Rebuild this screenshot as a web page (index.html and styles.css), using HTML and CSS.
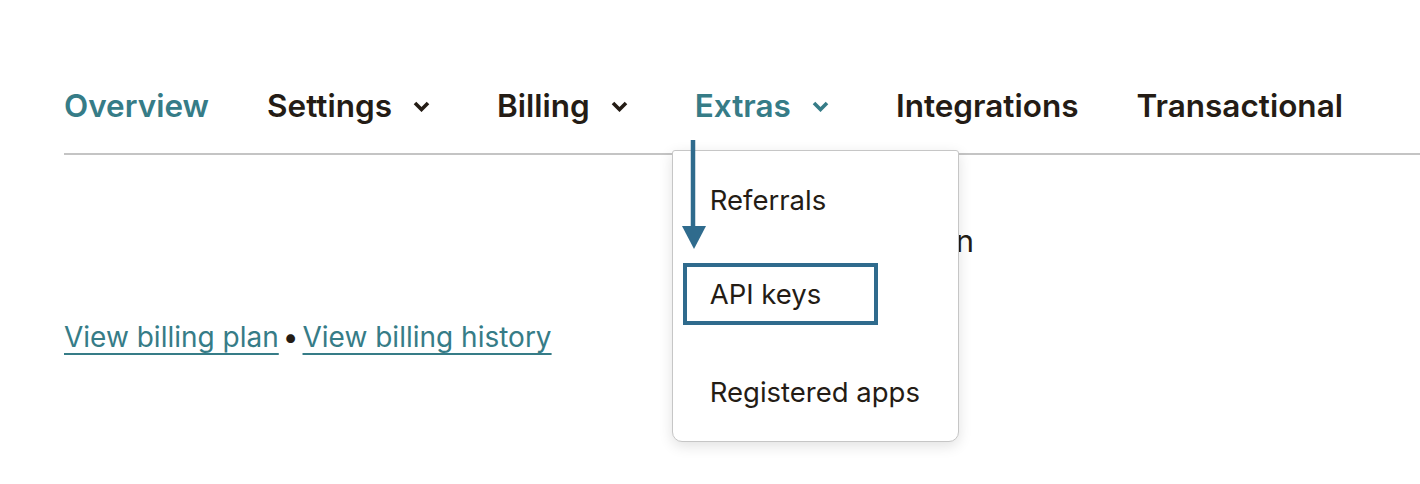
FILE: index.html
```html
<!DOCTYPE html>
<html lang="en">
<head>
<meta charset="utf-8">
<title>Account</title>
<link rel="stylesheet" href="styles.css">
</head>
<body>
<div class="page">
  <nav class="tabs">
    <a class="tab active" href="#">Overview</a>
    <a class="tab has-menu" href="#">Settings<svg class="chev" viewBox="0 0 17 11"><path d="M2 2 L8.5 8.5 L15 2"/></svg></a>
    <a class="tab has-menu" href="#">Billing<svg class="chev" viewBox="0 0 17 11"><path d="M2 2 L8.5 8.5 L15 2"/></svg></a>
    <div class="tab has-menu active open">Extras<svg class="chev" viewBox="0 0 17 11"><path d="M2 2 L8.5 8.5 L15 2"/></svg>
      <div class="menu">
        <div class="menu-item"><span class="menu-label">Referrals</span></div>
        <div class="menu-item"><span class="menu-label focused">API keys</span></div>
        <div class="menu-item"><span class="menu-label">Registered apps</span></div>
      </div>
      <svg class="arrow" viewBox="0 0 26 110"><line x1="11" y1="0" x2="11" y2="88"/><polygon points="0,86 24,86 12,109"/></svg>
    </div>
    <a class="tab" href="#">Integrations</a>
    <a class="tab" href="#">Transactional</a>
  </nav>
  <div class="content">
    <p class="plan-line">Monthly plan</p>
    <p class="links"><a href="#">View billing plan</a><span class="dot">•</span><a href="#">View billing history</a></p>
  </div>
</div>
</body>
</html>
```
FILE: styles.css
```css
* { box-sizing: border-box; }
html, body { margin: 0; padding: 0; background: #fff; }
body {
  font-family: "Inter", "Liberation Sans", sans-serif;
  color: #241c15;
  width: 1420px;
  height: 484px;
  overflow: hidden;
}
.page { padding-top: 82px; }
.tabs {
  display: flex;
  align-items: center;
  gap: 58px;
  margin-left: 64px;
  padding-bottom: 23px;
  border-bottom: 2px solid #c4c4c4;
}
.tab {
  position: relative;
  display: flex;
  align-items: center;
  font-size: 31.5px;
  font-weight: 600;
  line-height: 48px;
  color: #241c15;
  text-decoration: none;
}
.tab.active { color: #367c87; }
.tab.has-menu { padding-right: 9px; }
.chev {
  width: 17px;
  height: 11px;
  margin-left: 21px;
  fill: none;
  stroke: currentColor;
  stroke-width: 3.6;
}
.menu {
  position: absolute;
  left: -23px;
  top: 68px;
  width: 287px;
  padding: 1px 0 1px 0;
  background: #fff;
  border: 1px solid #c6c6c6;
  border-radius: 3px 3px 10px 10px;
  box-shadow: 0 4px 14px rgba(0,0,0,0.12);
  z-index: 2;
}
.menu-item {
  height: 96px;
  display: flex;
  align-items: center;
  padding-left: 10px;
}
.menu-label {
  font-size: 27.5px;
  font-weight: 400;
  color: #241c15;
  padding-left: 27px;
  line-height: 32px;
}
.menu-label.focused {
  width: 195px;
  height: 62px;
  display: flex;
  align-items: center;
  padding-left: 23px;
  border: 4px solid #2f6b8d;
  margin-top: -5px;
}
.arrow {
  position: absolute;
  left: -13px;
  top: 58px;
  width: 26px;
  height: 110px;
  z-index: 3;
  overflow: visible;
}
.arrow line { stroke: #2f6b8d; stroke-width: 4.5; }
.arrow polygon { fill: #2f6b8d; }
.content { margin-left: 64px; }
.plan-line {
  margin: 66px 0 0 0;
  width: 910px;
  text-align: right;
  font-size: 31px;
  line-height: 40px;
  white-space: nowrap;
}
.links {
  margin: 58px 0 0 0;
  font-size: 28px;
  line-height: 36px;
}
.links a {
  color: #367c87;
  text-decoration: underline;
  text-decoration-thickness: 2px;
  text-underline-offset: 6px;
}
.dot { margin: 0 4px; color: #241c15; }
```
